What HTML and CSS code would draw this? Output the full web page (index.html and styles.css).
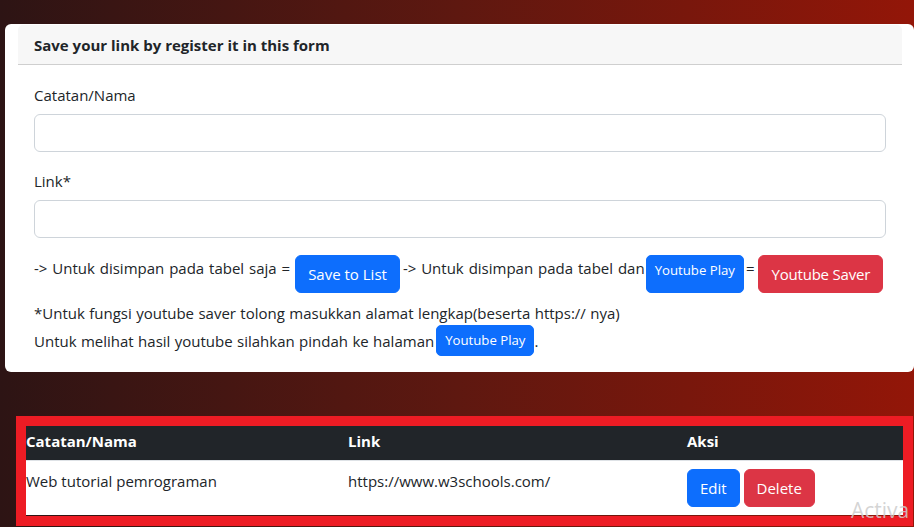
FILE: index.html
```html
<!DOCTYPE html>
<html lang="id">
<head>
<meta charset="utf-8">
<title>Link Saver</title>
<link rel="stylesheet" href="styles.css">
</head>
<body>
<div class="page">
  <section class="panel">
    <div class="panel-header">Save your link by register it in this form</div>
    <div class="panel-body">
      <label class="field-label" for="nama">Catatan/Nama</label>
      <input class="field-input" id="nama" type="text">
      <label class="field-label" for="link">Link*</label>
      <input class="field-input" id="link" type="text">
      <div class="action-row">
        <span class="row-text gap-r">-&gt; Untuk disimpan pada tabel saja =</span>
        <button class="btn btn-primary">Save to List</button>
        <span class="row-text gap-l">-&gt; Untuk disimpan pada tabel dan</span>
        <button class="btn btn-primary btn-sm">Youtube Play</button>
        <span class="row-text eq">=</span>
        <button class="btn btn-danger btn-tight">Youtube Saver</button>
      </div>
      <p class="note">*Untuk fungsi youtube saver tolong masukkan alamat lengkap(beserta https:// nya)</p>
      <div class="note-row">
        <span>Untuk melihat hasil youtube silahkan pindah ke halaman</span>
        <button class="btn btn-primary btn-sm">Youtube Play</button>
        <span>.</span>
      </div>
    </div>
  </section>

  <section class="table-frame">
    <table class="link-table">
      <colgroup>
        <col class="col-name">
        <col class="col-link">
        <col class="col-act">
      </colgroup>
      <thead>
        <tr><th>Catatan/Nama</th><th>Link</th><th>Aksi</th></tr>
      </thead>
      <tbody>
        <tr>
          <td>Web tutorial pemrograman</td>
          <td>https://www.w3schools.com/</td>
          <td><button class="btn btn-primary">Edit</button> <button class="btn btn-danger">Delete</button></td>
        </tr>
      </tbody>
    </table>
  </section>
  <div class="watermark">Activa</div>
</div>
</body>
</html>
```

FILE: styles.css
```css
html, body {
  margin: 0;
  padding: 0;
  height: 527px;
  overflow: hidden;
}
body {
  background: linear-gradient(to right, #2d1414 0%, #5e1810 50%, #931608 100%);
  font-family: "Open Sans", "Noto Sans", sans-serif;
  font-size: 15px;
  color: #212529;
}
.page {
  position: relative;
  height: 527px;
  padding-top: 24px;
  box-sizing: border-box;
}
.panel {
  margin-left: 5px;
  width: 909px;
  background: #fff;
  border-radius: 6px;
  padding-top: 1px;
}
.panel-header {
  margin: 0 12px 0 13px;
  height: 39px;
  line-height: 40px;
  background: #f7f7f7;
  border-bottom: 1px solid #cfcfcf;
  border-radius: 5px 5px 0 0;
  padding-left: 16px;
  font-weight: 700;
}
.panel-body {
  padding: 18px 28px 16px 29px;
}
.field-label {
  display: block;
  line-height: 24px;
  margin-bottom: 7px;
}
.field-input {
  display: block;
  box-sizing: border-box;
  width: 100%;
  height: 38px;
  border: 1px solid #ced4da;
  border-radius: 6px;
  margin: 0 0 17px 0;
  font: inherit;
}
.action-row {
  display: flex;
  align-items: stretch;
  height: 38px;
  margin-bottom: 8px;
}
.row-text {
  line-height: 26px;
  word-spacing: 1px;
}
.gap-r { margin-right: 5px; }
.gap-l { margin-left: 3px; margin-right: 1px; }
.eq { margin: 0 4px 0 2px; }
.btn {
  font-family: inherit;
  font-size: 15px;
  line-height: 24px;
  padding: 6px 12px;
  border: 1px solid transparent;
  border-radius: 6px;
  color: #fff;
  cursor: pointer;
}
.btn-primary { background: #0d6efd; border-color: #0d6efd; }
.btn-danger { background: #dc3545; border-color: #dc3545; }
.btn-tight { letter-spacing: -0.2px; }
.btn-sm {
  font-size: 13.2px;
  line-height: 21px;
  padding: 4px 8px;
  border-radius: 5px;
  vertical-align: top;
}
.action-row .btn-sm {
  display: flex;
  align-items: flex-start;
}
.note {
  margin: 0;
  line-height: 24px;
  word-spacing: 0.5px;
}
.note-row {
  display: flex;
  align-items: center;
  height: 31px;
  word-spacing: 0.5px;
}
.note-row .btn-sm { margin-left: 2px; height: 31px; word-spacing: 0; }
.table-frame {
  margin: 44px 0 0 16px;
  width: 877px;
  border: 10px solid #ed1c24;
}
.link-table {
  width: 877px;
  border-collapse: collapse;
  margin-bottom: 1px;
  background: #fff;
}
.col-name { width: 322px; }
.col-link { width: 339px; }
.col-act { width: 216px; }
.link-table th {
  background: #212529;
  color: #fff;
  text-align: left;
  font-weight: 700;
  padding: 3px 0 7px 0;
  line-height: 24px;
}
.link-table td {
  border-top: 1px solid #dee2e6;
  padding: 8px 0;
  line-height: 24px;
  vertical-align: top;
}
.watermark {
  position: absolute;
  left: 851px;
  top: 496px;
  font-size: 21px;
  color: rgba(205, 205, 205, 0.85);
  white-space: nowrap;
}
```
